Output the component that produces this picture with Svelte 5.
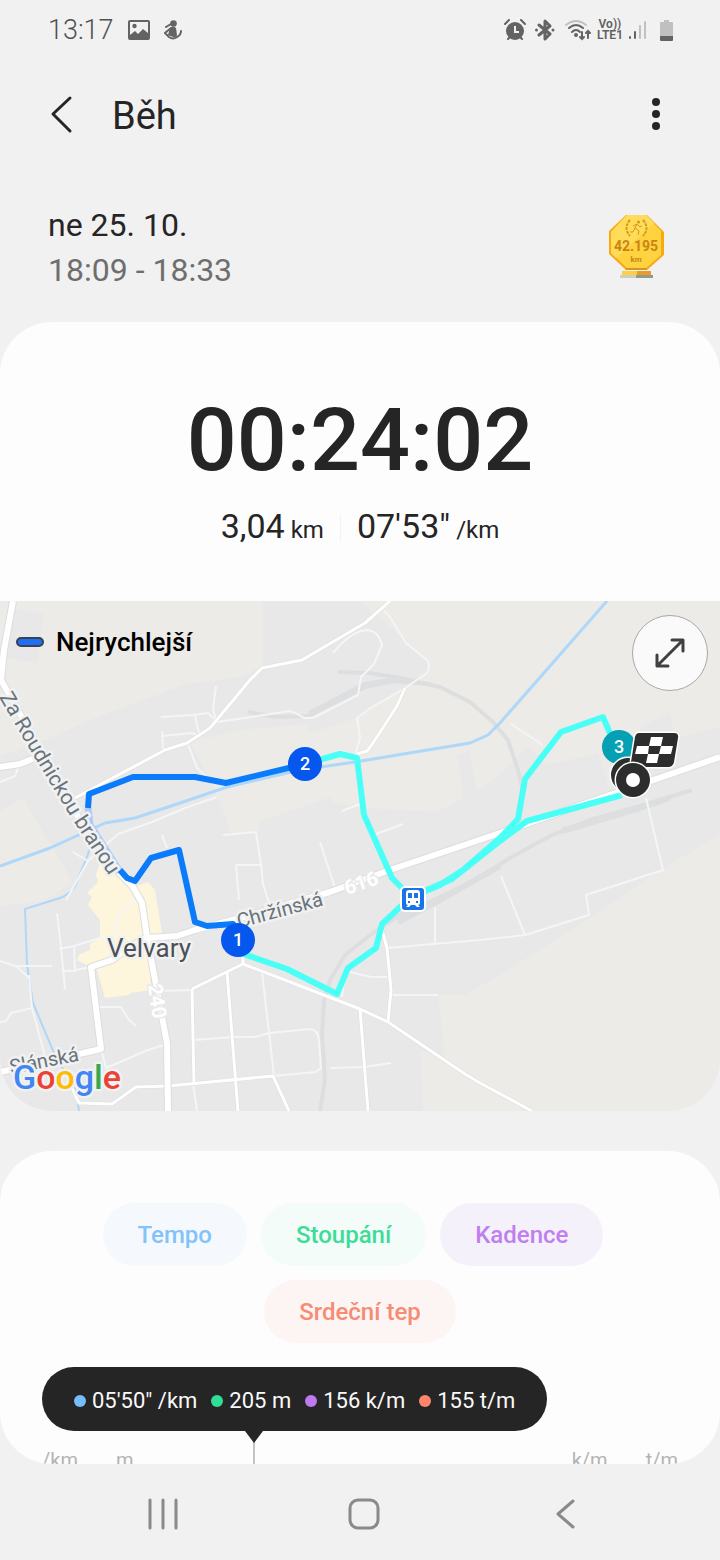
<script lang="ts">
  const points = [
    { value: '05\'50"', unit: '/km', kind: 'tempo' },
    { value: '205', unit: 'm', kind: 'climb' },
    { value: '156', unit: 'k/m', kind: 'cadence' },
    { value: '155', unit: 't/m', kind: 'heart' },
  ];

  let active = $state<string[]>(['tempo', 'climb', 'cadence', 'heart']);

  function toggle(kind: string) {
    active = active.includes(kind) ? active.filter((k) => k !== kind) : [...active, kind];
  }

  // unlabelled side streets
  const lanes = [
    'M161 717 L193 715 L208 713 L217 722 L245 718 L290 711 Q297 713 304 718 L313 718 L358 695 L361 677 L374 664 L382 645 Q378 630 366 630 Q350 632 333 653',
    'M217 722 L213 710 L216 686',
    'M162 731 L163 750 M162 736 L192 733 L200 737 L195 716',
    'M188 744 L197 768 L208 778',
    'M384 611 L390 617 L406 643 L427 660 Q431 668 427 673 L405 688 L369 709 L357 718 L360 738 L355 756',
    'M0 782 L15 776 L18 768',
    'M73 852 L88 861 L118 834 L152 822 L185 808 L217 797',
    'M88 861 L66 900',
    'M162 835 L167 848',
    'M223 835 L256 832 L261 865 L236 865 L239 900 M261 863 L263 884 L270 906',
    'M320 842 L335 888',
    'M342 811 L360 804 M376 834 L403 824',
    'M511 724 L543 745',
    'M646 798 L663 870 L586 895 L589 915 L525 935 L480 940 L387 948',
    'M525 935 L501 876 M435 945 L435 907',
    'M345 971 L371 977 L387 977 M391 995 L438 995',
    'M57 913 L61 947 L65 989 M59 949 L74 946 L100 938 L121 936',
    'M74 946 L75 971 L62 971 M75 970 L91 967',
    'M135 899 L117 918 L116 937',
    'M0 961 L16 966 L52 966 M16 966 L29 978',
    'M0 1022 L6 1021 L11 1013 L32 1008 L46 1060 M32 1008 L29 975',
    'M99 1007 L121 1007 L129 1020 L136 1026',
    'M101 1049 L106 1068 L148 1050 L164 1045',
    'M158 991 L192 990 M193 1040 L235 1037 L255 1037 L269 1033 L310 1029 Q318 1030 319 1040 L321 1068 L316 1072 L274 1076',
    'M262 972 L274 1076 M330 1068 L364 1067 L391 1063',
    'M344 980 L342 997 M193 1084 L197 1111',
  ];

  const streets = [
    'M75 798 L165 750 L187 743 L210 728 L250 680 L262 668 L302 660 L365 623 L390 601',
    'M357 754 L367 751 L373 743 L397 706 L405 688',
    'M192 989 L243 964 L360 1009 L388 1022 L465 1074 L480 1083 L532 1111',
    'M192 989 L194 1084 M227 972 L238 1111',
    'M243 964 L243 948 M360 1009 L368 1111',
    'M388 1022 L391 990 L387 948 L382 930',
    'M70 1084 L79 1103 L112 1104 L136 1087 L168 1086 L273 1076 L289 1111',
  ];
</script>

<div class="screen">
  <div class="status">
    <time class="now">13:17</time>
    <svg class="pic" viewBox="0 0 22 20" aria-hidden="true">
      <path fill-rule="evenodd" d="M2 0H20Q22 0 22 2V18Q22 20 20 20H2Q0 20 0 18V2Q0 0 2 0ZM2 2V15L7 11L10 14L15 9L20 13V2Z" />
      <circle cx="6.500" cy="6" r="2.200" />
    </svg>
    <svg class="runner" viewBox="0 0 18 20" aria-hidden="true">
      <circle cx="9.500" cy="3.500" r="3.300" />
      <path d="M6 8Q9 5 12 8L13 15Q12 18 9 17L4 15Z" />
      <path class="line" d="M2 7L7 4M7 8L1 13L5 17Q9 20 13 17Q17 15 17 11" />
    </svg>
    <div class="icons">
      <svg width="22" height="22" viewBox="0 0 22 22" aria-hidden="true">
        <circle cx="11" cy="12" r="9" />
        <path class="line" d="M1 5L5 1M17 1L21 5M4 20L6 18M18 20L16 18" />
        <path class="hands" d="M11 7V13H15" />
      </svg>
      <svg class="bluetooth" width="20" height="22" viewBox="0 0 20 22" aria-hidden="true">
        <path class="line" d="M4 6L15 15L10 20V2L15 7L4 16" />
        <circle cx="1.500" cy="11" r="1.500" /><circle cx="18" cy="11" r="1.500" />
      </svg>
      <svg width="28" height="22" viewBox="0 0 28 22" aria-hidden="true">
        <path class="line pale" d="M2 6Q12 -2 22 6" />
        <path class="line" d="M5 9Q12 3 19 9M8 13Q12 9 16 13" />
        <circle cx="12" cy="16" r="2" />
        <path class="thin" d="M18 13V20M16 18L18 20L20 18M24 19V12M22 14L24 12L26 14" />
      </svg>
      <span class="volte"><span>Vo))</span><span>LTE1</span></span>
      <svg width="20" height="20" viewBox="0 0 20 20" aria-hidden="true">
        <path class="bar" d="M2 17V18M7 12V18" /><path class="bar pale" d="M12 6V18M17 2V18" />
      </svg>
      <svg class="battery" width="13" height="21" viewBox="0 0 13 21" aria-hidden="true">
        <path class="case" d="M4 0H9V2H12Q13 2 13 3V16H0V3Q0 2 1 2H4Z" />
        <path d="M0 16H13V20Q13 21 12 21H1Q0 21 0 20Z" />
      </svg>
    </div>
  </div>

  <header>
    <button class="plain" aria-label="Zpět">
      <svg width="24" height="40" viewBox="0 0 24 40"><path class="chevron" d="M20 3L3 19L20 36" /></svg>
    </button>
    <h1>Běh</h1>
    <button class="plain more" aria-label="Další možnosti">
      <svg width="12" height="36" viewBox="0 0 12 36">
        <circle cx="6" cy="5" r="4" /><circle cx="6" cy="17" r="4" /><circle cx="6" cy="29" r="4" />
      </svg>
    </button>
  </header>

  <section class="date">
    <div>
      <p>ne 25. 10.</p>
      <p class="hours">18:09 - 18:33</p>
    </div>
    <svg class="medal" viewBox="0 0 58 66" role="img" aria-label="42.195 km">
      <path fill="#f9aa12" d="M18 0H39L56 17V40L39 55H18L1 39V16Z" />
      <path fill="#ffd23f" d="M19 0H38L53 16V40L38 53H19L3 38V17Z" />
      <path fill="#ffdc5a" d="M19 0H38L46 8L8 43L3 38V17Z" />
      <path fill="#d8961a" d="M18 55L17 53H39L39 55Z" />
      <path fill="#ffcf3d" d="M14 56H29V60H14Z" /><path fill="#ec9b26" d="M29 56H43V60H29Z" />
      <path fill="#c9d0c8" d="M12 60H28V63H12Z" /><path fill="#8f9b92" d="M28 60H45V63H28Z" />
      <path class="wreath" d="M22 5Q15 13 22 21M35 5Q42 13 35 21" />
      <path class="body" d="M29 9L27 13L31 16L30 20M27 13L25 17L22 17M25 11L29 9L32 12L34 11" />
      <circle fill="#d8961a" cx="30.500" cy="7" r="1.500" />
      <text class="dist" x="28" y="36">42.195</text>
      <text class="km" x="28" y="47">km</text>
    </svg>
  </section>

  <main>
    <section class="summary">
      <div class="clock">00:24:02</div>
      <div class="stats">
        <span class="stat">3,04<small>km</small></span>
        <i></i>
        <span class="stat">07'53"<small>/km</small></span>
      </div>
      <div class="map">
        <svg class="canvas" viewBox="0 601 720 510" role="img" aria-label="Mapa trasy">
          <g class="field">
            <path d="M0 601H263V667L240 677L186 684L95 718L45 740L0 756Z" />
            <path d="M360 601H720V727L675 738L670 712L640 727L647 760L610 790L598 753L548 765L527 746L500 775L480 789L437 812L365 808L335 803L330 797L258 822V830L232 834L215 790L190 742L240 730L307 724L308 734L356 718L430 672L428 660L405 640Z" />
            <path d="M720 835L660 870L600 912L500 975L465 995H438L445 1055L421 1050L423 1111H720Z" />
            <path d="M0 811L23 798L73 882L45 901L0 906Z" />
          </g>
          <path class="patch" d="M9 609L43 613L38 663L7 658ZM457 756L469 751L478 798L464 800Z" />
          <path class="town" d="M100 862L118 870L134 887L148 882L155 890L162 933L148 940L151 990L130 993L129 995L105 998L97 970L77 960L79 955L90 950V944L100 938V920L88 905L92 897L87 893L98 882L96 875Z" />

          <g class="rail">
            <path d="M320 1111L325 1080L322 1035L324 1000L330 980L345 955L370 935L400 915L440 897L475 880L510 858L550 836L590 820L640 806L692 790" />
            <path d="M338 672L370 673L400 678L440 687L470 702L493 722L508 740L518 770L523 790" />
            <path d="M248 712L275 717L307 716L340 700L365 687L390 681L430 684" />
            <path class="wide" d="M310 714L340 698L365 685L390 681M398 922L440 900L500 866M562 831L640 808L670 798" />
          </g>

          <g class="water">
            <path d="M0 866L50 848L83 833L105 823L135 818L180 803L227 787L300 770L355 762L470 743L488 735L500 723L607 601" />
            <path class="stream" d="M91 846L85 862L75 886Q70 894 60 898L25 909L27 965L33 1003L54 1053L76 1091L79 1111" />
          </g>

          <g class="lane">
            {#each lanes as d}<path {d} />{/each}
          </g>
          <g class="edge small">
            {#each streets as d}<path {d} />{/each}
          </g>
          <g class="street">
            {#each streets as d}<path {d} />{/each}
          </g>
          {#each ['edge', 'road'] as kind}
            <g class={kind}>
              <path d="M13 601L4 650L1 680L40 750L97 850L133 887L142 903L147 937L157 990L167 1043L168 1111" />
              <path d="M147 938L177 936L195 930L240 918L330 892L390 870L500 833L720 757" />
              <path d="M147 937L125 950L112 960L91 967L101 1049L0 1072" />
              <path d="M0 767L20 764L42 755" />
            </g>
          {/each}

          <path class="route ghost" d="M88 808L90 825L120 872" />
          <g class="route fast">
            <path d="M88 808L89 794L133 777H195L226 783L305 764" />
            <path d="M120 870L127 878L135 881L151 858L179 850L195 922L207 926L233 924L238 940" />
          </g>
          <g class="route">
            <path d="M305 764L340 754L357 758L364 815L392 878L411 897L382 924L376 948L348 968L337 994L287 969L238 952" />
            <path d="M411 897L440 885L463 870L500 838L518 819L525 779L561 732L603 717L612 738" />
            <path d="M420 893L452 879L500 841L527 821L622 795" />
          </g>

          <path id="branou" fill="none" d="M-1 697L33 755L72 819L120 892" />
          <text class="label street-name long"><textPath href="#branou">Za Roudnickou branou</textPath></text>
          <text class="label street-name" transform="translate(239 928) rotate(-15)">Chržínská</text>
          <text class="label street-name" transform="translate(11 1074) rotate(-11)">Slánská</text>
          <text class="label number" transform="translate(347 895) rotate(-19)">616</text>
          <text class="label number" transform="translate(148 985) rotate(82)">240</text>
          <text class="label town-name" x="107" y="957">Velvary</text>
          <text class="label google" x="13" y="1089"><tspan fill="#4285f4">G</tspan><tspan fill="#ea4335">o</tspan><tspan fill="#fbbc05">o</tspan><tspan fill="#4285f4">g</tspan><tspan fill="#34a853">l</tspan><tspan fill="#ea4335">e</tspan></text>

          <rect x="401" y="887" width="24" height="24" rx="4" fill="#1a73e8" stroke="#fff" stroke-width="2" />
          <path fill="#fff" fill-rule="evenodd" d="M409 890H417Q420 890 420 893V903Q420 905 418 905L420 907H417L415 905H411L409 907H406L408 905Q406 905 406 903V893Q406 890 409 890ZM408 893V898H412V893ZM414 893V898H418V893ZM408 901V903H410V901ZM416 901V903H418V901Z" />

          <g class="pin">
            <circle cx="238" cy="940" r="17" /><text x="238" y="946">1</text>
            <circle cx="305" cy="764" r="17" /><text x="305" y="770">2</text>
            <circle class="last" cx="619" cy="747" r="17" /><text x="619" y="753">3</text>
          </g>
          <g class="marker">
            <circle cx="628" cy="775" r="17" />
            <path d="M639 733H674Q679 733 678 738L674 762Q673 767 668 767H634Q630 767 631 762L635 737Q636 733 639 733Z" />
            <circle cx="633" cy="780" r="17" />
            <circle class="hole" cx="633" cy="780" r="7" />
            <path class="hole" d="M651 737H663L661 746H673L671 754H659L657 763H646L648 754H635L637 746H649ZM649 746L648 754H659L661 746Z" fill-rule="evenodd" />
          </g>
        </svg>
        <div class="legend"><i></i>Nejrychlejší</div>
        <button class="expand" aria-label="Zvětšit mapu">
          <svg width="32" height="32" viewBox="0 0 32 32"><path d="M3 29L29 3M18 3H29V14M3 18V29H14" /></svg>
        </button>
      </div>
    </section>

    <section class="chart-card">
      <div class="chips">
        <button class="tempo" aria-pressed={active.includes('tempo')} onclick={() => toggle('tempo')}>Tempo</button>
        <button class="climb" aria-pressed={active.includes('climb')} onclick={() => toggle('climb')}>Stoupání</button>
        <button class="cadence" aria-pressed={active.includes('cadence')} onclick={() => toggle('cadence')}>Kadence</button>
      </div>
      <div class="chips second">
        <button class="heart" aria-pressed={active.includes('heart')} onclick={() => toggle('heart')}>Srdeční tep</button>
      </div>
      <div class="chart">
        <div class="tip">
          {#each points as p}
            <span class="reading"><i class={p.kind}></i>{p.value} {p.unit}</span>
          {/each}
        </div>
        <div class="axis">
          <span>/km</span><span>m</span><span class="push">k/m</span><span>t/m</span>
        </div>
      </div>
    </section>
  </main>

  <nav>
    <button class="plain" aria-label="Poslední aplikace">
      <svg width="32" height="32" viewBox="0 0 32 32"><path d="M3 2V30M16 2V30M29 2V30" /></svg>
    </button>
    <button class="plain" aria-label="Domů">
      <svg width="34" height="34" viewBox="0 0 34 34"><rect x="3" y="3" width="28" height="28" rx="8" /></svg>
    </button>
    <button class="plain" aria-label="Zpět">
      <svg width="32" height="32" viewBox="0 0 32 32"><path d="M24 3L9 16L24 29" /></svg>
    </button>
  </nav>
</div>

<style>
  :global(body) {
    background: #f1f1f1;
  }
  .screen {
    display: flex;
    flex-direction: column;
    height: 100vh;
    overflow: hidden;
    font-family: Roboto, "Liberation Sans", sans-serif;
    color: #252525;
  }
  h1, p {
    margin: 0;
    font-weight: 400;
  }
  svg {
    display: block;
  }
  button {
    font-family: inherit;
    border: none;
    cursor: pointer;
  }
  .plain {
    display: flex;
    align-items: center;
    justify-content: center;
    padding: 0;
    background: none;
  }

  .status {
    display: flex;
    flex: none;
    align-items: center;
    height: 60px;
    padding: 0 47px 0 48px;
    color: #606060;
    fill: #636363;
  }
  .now {
    font-size: 27px;
    font-weight: 300;
    color: #505050;
  }
  .pic {
    width: 22px;
    height: 20px;
    margin-left: 14px;
  }
  .runner {
    width: 18px;
    height: 20px;
    margin-left: 14px;
  }
  .line, .thin, .bar {
    fill: none;
    stroke: #636363;
    stroke-width: 2;
    stroke-linecap: round;
  }
  .bluetooth .line {
    stroke-width: 3;
    stroke-linejoin: round;
  }
  .line.pale, .bar.pale {
    stroke: #c0c0c0;
  }
  .hands {
    fill: none;
    stroke: #f1f1f1;
    stroke-width: 2;
  }
  .icons {
    display: flex;
    align-items: center;
    gap: 9px;
    margin-left: auto;
  }
  .volte {
    display: flex;
    flex-direction: column;
    align-items: center;
    margin: 0 -4px;
    font-size: 12px;
    font-weight: 600;
    line-height: 11px;
  }
  .battery {
    margin-left: 3px;
  }
  .case {
    fill: #c0c0c0;
  }

  header {
    display: flex;
    flex: none;
    align-items: center;
    height: 110px;
    padding: 0 58px 0 50px;
  }
  h1 {
    padding-top: 2px;
    margin-left: 38px;
    font-size: 38px;
  }
  header svg {
    fill: #252525;
  }
  .chevron {
    fill: none;
    stroke: #252525;
    stroke-width: 3;
    stroke-linecap: round;
    stroke-linejoin: round;
  }
  .more {
    margin-left: auto;
  }

  .date {
    display: flex;
    flex: none;
    align-items: center;
    justify-content: space-between;
    padding: 33px 54px 29px 48px;
    font-size: 32px;
    line-height: 45px;
  }
  .hours {
    color: #6e6e6e;
  }
  .medal {
    width: 58px;
    height: 66px;
  }
  .wreath, .body {
    fill: none;
    stroke: #d8961a;
    stroke-width: 2;
  }
  .wreath {
    stroke-dasharray: 3 1;
  }
  .body {
    stroke-width: 1;
  }
  .medal text {
    fill: #c98412;
    font-weight: 700;
    text-anchor: middle;
  }
  .dist {
    font-size: 14px;
  }
  .km {
    font-size: 8px;
  }

  main {
    display: flex;
    flex: 1;
    flex-direction: column;
    gap: 40px;
    min-height: 0;
  }
  .summary {
    flex: none;
    padding-top: 74px;
    overflow: hidden;
    background: #fdfdfd;
    border-radius: 52px;
  }
  .clock {
    font-size: 88px;
    font-weight: 500;
    line-height: 88px;
    text-align: center;
  }
  .stats {
    display: flex;
    align-items: center;
    justify-content: center;
    gap: 16px;
    height: 44px;
    margin: 22px 0 51px;
  }
  .stats i {
    width: 1px;
    height: 26px;
    background: #f3f3f3;
  }
  .stat {
    display: flex;
    gap: 6px;
    align-items: baseline;
    font-size: 34px;
    line-height: 44px;
  }
  .stat small {
    font-size: 24px;
  }

  .map {
    position: relative;
    background: #e8e8e8;
  }
  .canvas {
    width: 100%;
    height: auto;
  }
  .field {
    fill: #ecebe7;
  }
  .patch {
    fill: #e8e8e8;
  }
  .town {
    fill: #fdf5dc;
  }
  .rail, .water, .lane, .edge, .street, .road, .route {
    fill: none;
    stroke-linejoin: round;
  }
  .rail {
    stroke: #dddee0;
    stroke-width: 4;
  }
  .wide {
    stroke-width: 6;
  }
  .water {
    stroke: #aed7f9;
    stroke-width: 3;
  }
  .stream {
    stroke-width: 2;
  }
  .lane {
    stroke: #f4f5f6;
    stroke-width: 2;
  }
  .edge {
    stroke: #dcddde;
    stroke-width: 8;
  }
  .edge.small {
    stroke-width: 4;
  }
  .street {
    stroke: #fff;
    stroke-width: 3;
  }
  .road {
    stroke: #fff;
    stroke-width: 6;
  }
  .route {
    stroke: #4afff6;
    stroke-width: 6;
  }
  .route.fast {
    stroke: #0a7bfb;
  }
  .route.ghost {
    stroke: #a9cdf8;
    stroke-width: 7;
  }
  .label {
    stroke: #f1f1f1;
    stroke-width: 5;
    stroke-linejoin: round;
    paint-order: stroke;
  }
  .street-name {
    font-size: 20px;
    fill: #68747c;
  }
  .street-name.long {
    font-size: 21px;
  }
  .number {
    font-size: 20px;
    font-weight: 700;
    fill: #fff;
    stroke: #e8e9ea;
    stroke-width: 3;
  }
  .town-name {
    font-size: 26px;
    fill: #4b5157;
  }
  .google {
    font-size: 34px;
    font-weight: 500;
  }
  .pin {
    fill: #0657ee;
  }
  .last {
    fill: #05a0b4;
  }
  .pin text {
    font-size: 18px;
    font-weight: 500;
    fill: #fff;
    text-anchor: middle;
  }
  .marker {
    fill: #2d2d2d;
    stroke: #fff;
    stroke-width: 3;
    paint-order: stroke;
  }
  .hole {
    fill: #fff;
    stroke: none;
  }
  .legend {
    position: absolute;
    top: 24px;
    left: 16px;
    display: flex;
    align-items: center;
    gap: 12px;
    font-size: 26px;
    font-weight: 500;
    line-height: 34px;
    color: #000;
  }
  .legend i {
    box-sizing: border-box;
    width: 28px;
    height: 10px;
    background: #1f6ff5;
    border: 2px solid #3a4152;
    border-radius: 5px;
  }
  .expand {
    position: absolute;
    top: 14px;
    right: 12px;
    display: flex;
    align-items: center;
    justify-content: center;
    width: 76px;
    height: 76px;
    padding: 0;
    background: #fafafa;
    border: 1px solid #a8a8a8;
    border-radius: 50%;
  }
  .expand path {
    fill: none;
    stroke: #404040;
    stroke-width: 3;
    stroke-linecap: round;
    stroke-linejoin: round;
  }

  .chart-card {
    flex: 1;
    min-height: 0;
    padding-top: 52px;
    overflow: hidden;
    background: #fdfdfd;
    border-radius: 52px;
  }
  .chips {
    display: flex;
    justify-content: center;
    gap: 14px;
    padding-right: 14px;
  }
  .chips.second {
    padding: 14px 0 24px;
  }
  .chips button {
    height: 63px;
    padding: 0 35px;
    font-size: 24px;
    font-weight: 500;
    border-radius: 32px;
  }
  .chips .tempo {
    color: #82c3fa;
    background: #f5f9fd;
  }
  .chips .climb {
    color: #3edc98;
    background: #f3fcf9;
  }
  .chips .cadence {
    color: #c07fee;
    background: #f5f1fb;
  }
  .chips .heart {
    color: #f78b73;
    background: #fcf5f4;
  }
  .chart {
    position: relative;
    padding: 0 42px;
  }
  .tip {
    position: relative;
    display: flex;
    box-sizing: border-box;
    align-items: center;
    gap: 14px;
    width: fit-content;
    height: 64px;
    padding: 3px 32px 0;
    font-size: 22px;
    color: #fafafa;
    white-space: nowrap;
    background: #252525;
    border-radius: 32px;
  }
  .tip::before {
    position: absolute;
    top: 64px;
    left: 211px;
    width: 2px;
    height: 200px;
    background: #c4c4c4;
    content: "";
  }
  .tip::after {
    position: absolute;
    top: 64px;
    left: 203px;
    border: 9px solid transparent;
    border-top: 12px solid #252525;
    border-bottom: none;
    content: "";
  }
  .reading {
    display: flex;
    align-items: center;
    gap: 6px;
  }
  .reading i {
    width: 12px;
    height: 12px;
    border-radius: 50%;
  }
  i.tempo {
    background: #75bdfc;
  }
  i.climb {
    background: #30df94;
  }
  i.cadence {
    background: #bf7af2;
  }
  i.heart {
    background: #ff866c;
  }
  .axis {
    display: flex;
    gap: 38px;
    margin-top: 17px;
    font-size: 20px;
    line-height: 24px;
    color: #b4b4b4;
  }
  .push {
    margin-left: auto;
  }

  nav {
    display: flex;
    flex: none;
    height: 96px;
    padding: 0 55px 0 62px;
  }
  nav button {
    flex: 1;
    padding-top: 4px;
  }
  nav svg {
    margin-top: 4px;
  }
  nav path, nav rect {
    fill: none;
    stroke: #8a8a8a;
    stroke-width: 3;
    stroke-linecap: round;
    stroke-linejoin: round;
  }
</style>
